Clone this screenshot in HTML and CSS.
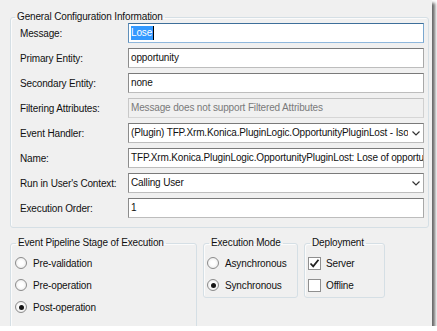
FILE: index.html
```html
<!DOCTYPE html>
<html>
<head>
    <meta charset="utf-8">
    <title>Step Registration</title>
    <link rel="stylesheet" href="styles.css">
</head>
<body>
    <div class="window">

        <fieldset class="group general">
            <legend>General Configuration Information</legend>
            <div class="form">
                <div class="label">Message:</div>
                <div class="field focused"><span class="selected">Lose</span></div>

                <div class="label">Primary Entity:</div>
                <div class="field">opportunity</div>

                <div class="label">Secondary Entity:</div>
                <div class="field">none</div>

                <div class="label">Filtering Attributes:</div>
                <div class="field disabled">Message does not support Filtered Attributes</div>

                <div class="label">Event Handler:</div>
                <div class="field combo">
                    <span class="combo-text">(Plugin) TFP.Xrm.Konica.PluginLogic.OpportunityPluginLost - Isolation Mode: None</span>
                    <svg class="chevron" width="8" height="5" viewBox="0 0 8 5"><polyline points="0.5,0.5 4,4 7.5,0.5" fill="none" stroke="#333" stroke-width="1.2"/></svg>
                </div>

                <div class="label">Name:</div>
                <div class="field">TFP.Xrm.Konica.PluginLogic.OpportunityPluginLost: Lose of opportunity</div>

                <div class="label">Run in User's Context:</div>
                <div class="field combo">
                    <span class="combo-text">Calling User</span>
                    <svg class="chevron" width="8" height="5" viewBox="0 0 8 5"><polyline points="0.5,0.5 4,4 7.5,0.5" fill="none" stroke="#333" stroke-width="1.2"/></svg>
                </div>

                <div class="label">Execution Order:</div>
                <div class="field">1</div>
            </div>
        </fieldset>

        <div class="stages">
            <fieldset class="group pipeline">
                <legend>Event Pipeline Stage of Execution</legend>
                <div class="options">
                    <div class="option"><span class="radio"></span>Pre-validation</div>
                    <div class="option"><span class="radio"></span>Pre-operation</div>
                    <div class="option"><span class="radio on"></span>Post-operation</div>
                </div>
            </fieldset>

            <fieldset class="group mode">
                <legend>Execution Mode</legend>
                <div class="options">
                    <div class="option"><span class="radio"></span>Asynchronous</div>
                    <div class="option"><span class="radio on"></span>Synchronous</div>
                </div>
            </fieldset>

            <fieldset class="group deploy">
                <legend>Deployment</legend>
                <div class="options">
                    <div class="option">
                        <span class="check">
                            <svg width="11" height="11" viewBox="0 0 11 11"><polyline points="1.5,5.5 4.2,8.3 9.5,1.8" fill="none" stroke="#222" stroke-width="1.8"/></svg>
                        </span>Server
                    </div>
                    <div class="option"><span class="check"></span>Offline</div>
                </div>
            </fieldset>
        </div>

    </div>
</body>
</html>
```

FILE: styles.css
```css
*, *::before, *::after {
    box-sizing: border-box;
}

body {
    margin: 0;
    background: #fff;
    font-family: "Liberation Sans", Arial, sans-serif;
    font-size: 10px;
    letter-spacing: -0.15px;
    color: #111;
}

.window {
    width: 432px;
    height: 326px;
    background: #f0f0f0;
    box-shadow: 3px 3px 3px rgba(0, 0, 0, 0.6);
    overflow: hidden;
    padding: 11px 3px 0 10px;
}

.group {
    margin: 0;
    padding: 0;
    min-width: 0;
    border: 1px solid #d5dfe5;
    border-radius: 3px;
    box-shadow: inset 1px 1px #fbfbfb;
}

.group legend {
    margin-left: 5px;
    padding: 0 2px;
    line-height: 12px;
}

.general legend {
    margin-left: 4px;
}

.form {
    display: grid;
    grid-template-columns: 108px 1fr;
    grid-auto-rows: 20px;
    row-gap: 5px;
    align-items: center;
    padding: 0 4px 9px 9px;
}

.label {
    white-space: nowrap;
}

.field {
    height: 20px;
    background: #fff;
    border: 1px solid;
    border-color: #7a7a7a #a8a8a8 #bdbdbd #8c8c8c;
    padding: 0 2px;
    line-height: 18px;
    white-space: nowrap;
    overflow: hidden;
}

.field.focused {
    border-color: #3d6f9a #7aa7cf #8fb7dc #5f8fba;
}

.selected {
    display: inline-block;
    margin-top: 2px;
    line-height: 14px;
    background: #3399ff;
    color: #fff;
    padding: 0 1px 0 0;
    border-right: 1px solid #000;
}

.field.disabled {
    background: #f0f0f0;
    border-color: #c2c2c2 #d0d0d0 #d6d6d6 #c8c8c8;
    color: #7a7a7a;
}

.field.combo {
    display: flex;
    align-items: center;
    padding-right: 3px;
}

.combo-text {
    flex: 1;
    overflow: hidden;
    white-space: nowrap;
}

.chevron {
    flex: none;
    margin-left: 4px;
}

.stages {
    display: flex;
    gap: 6px;
    margin-top: 9px;
    align-items: flex-start;
}

.pipeline {
    width: 187px;
}

.mode {
    width: 95px;
}

.deploy {
    width: 81px;
}

.options {
    padding: 3px 0 1px 3px;
}

.pipeline .options {
    padding: 3px 0 20px 4px;
}

.option {
    display: flex;
    align-items: center;
    height: 22px;
    gap: 6px;
    white-space: nowrap;
}

.radio {
    flex: none;
    width: 12px;
    height: 12px;
    border-radius: 50%;
    border: 1px solid #8b8b8b;
    background: radial-gradient(circle, #fff 30%, #e4e4e4);
    display: flex;
    align-items: center;
    justify-content: center;
}

.radio.on::after {
    content: "";
    width: 5px;
    height: 5px;
    border-radius: 50%;
    background: #151515;
}

.check {
    flex: none;
    width: 13px;
    height: 13px;
    border: 1px solid #8f8f8f;
    background: #fff;
    display: flex;
    align-items: center;
    justify-content: center;
}

.deploy .option {
    gap: 5px;
}
```
